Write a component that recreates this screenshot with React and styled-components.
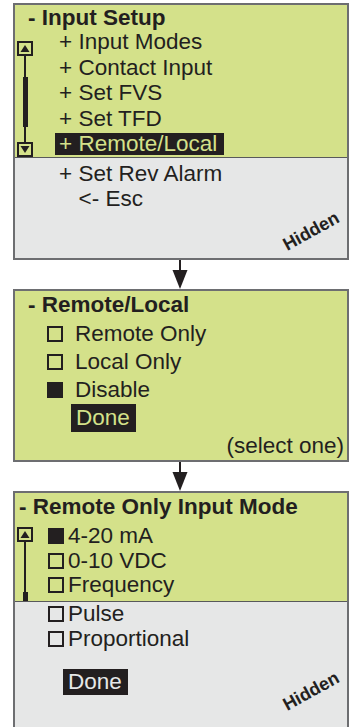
import React from 'react';
import styled, { createGlobalStyle } from 'styled-components';

const GREEN = '#d4e18a';
const GREY = '#e6e7e7';
const INK = '#231f20';

const GlobalStyle = createGlobalStyle`
  html, body {
    margin: 0;
    padding: 0;
    background: #ffffff;
    overflow: hidden;
  }
  body {
    font-family: "Liberation Sans", Arial, sans-serif;
    color: ${INK};
  }
`

const Page = styled.div`
  width: 336px;
  padding: 3px 0 0 13px;
  display: flex;
  flex-direction: column;
`

const Panel = styled.div`
  border: 2px solid #6d6e71;
  display: flex;
  flex-direction: column;
`

const Screen = styled.div`
  background: ${GREEN};
  height: ${p => p.$h}px;
  padding-top: ${p => p.$pt}px;
  box-sizing: border-box;
  display: flex;
  flex-direction: column;
  border-bottom: ${p => p.$divider ? `1px solid #58595b` : 'none'};
`

const HiddenArea = styled.div`
  position: relative;
  background: ${GREY};
  height: ${p => p.$h}px;
  padding: ${p => p.$pt}px 0 0 ${p => p.$pl}px;
  box-sizing: border-box;
`

const Title = styled.div`
  font-weight: bold;
  font-size: 22.5px;
  line-height: 22px;
  padding-left: ${p => p.$pl}px;
  margin-bottom: ${p => p.$mb || 0}px;
  white-space: pre;
`

const Body = styled.div`
  flex: 1;
  display: flex;
  padding-left: 2px;
`

const ScrollCol = styled.div`
  width: 16px;
  margin-top: ${p => p.$mt}px;
  display: flex;
  flex-direction: column;
  align-items: center;
`

const ScrollLine = styled.div`
  width: 2px;
  background: ${INK};
  flex: ${p => p.$grow};
`

const Thumb = styled.div`
  width: 5px;
  height: ${p => p.$h}px;
  background: ${INK};
`

const List = styled.div`
  margin-left: ${p => p.$ml}px;
`

const Item = styled.div`
  font-size: 22.5px;
  line-height: ${p => p.$lh || 25.5}px;
  padding-left: ${p => p.$indent || 0}px;
  white-space: pre;
`

const Selected = styled.span`
  display: inline-block;
  background: ${INK};
  color: ${GREEN};
  line-height: 22px;
  padding: 0 7px 0 4px;
  margin-left: -4px;
`

const Check = styled.span`
  display: inline-block;
  width: 16px;
  height: 16px;
  box-sizing: border-box;
  border: 2px solid ${INK};
  background: ${p => p.$on ? INK : 'transparent'};
  margin-right: ${p => p.$gap}px;
  vertical-align: -1px;
`

const DoneRow = styled.div`
  padding-left: ${p => p.$pl}px;
  margin-top: ${p => p.$mt || 0}px;
  font-size: 22.5px;
  line-height: ${p => p.$lh}px;
`

const DoneButton = styled.span`
  display: inline-block;
  background: ${INK};
  color: ${p => p.$fg};
  line-height: ${p => p.$lh}px;
  padding: 0 6px 0 5px;
`

const Hint = styled.div`
  font-size: 22.5px;
  line-height: 25.5px;
  text-align: right;
  padding-right: 3px;
  margin-top: 1px;
`

const HiddenLabel = styled.div`
  position: absolute;
  right: -4px;
  top: ${p => p.$top}px;
  width: 80px;
  text-align: center;
  font-weight: bold;
  font-size: 18px;
  line-height: 18px;
  transform: rotate(-29deg);
`

const ArrowWrap = styled.div`
  height: 29px;
  display: flex;
  justify-content: center;
  padding-right: 2px;
`

const UpBox = () => (
  <svg width="16" height="15" viewBox="0 0 16 15" style={{ display: 'block' }}>
    <rect x="1" y="1" width="14" height="13" fill="none" stroke={INK} strokeWidth="2" />
    <polygon points="3.5,11 12.5,11 8,4" fill={INK} />
  </svg>
)

const DownBox = () => (
  <svg width="16" height="15" viewBox="0 0 16 15" style={{ display: 'block' }}>
    <rect x="1" y="1" width="14" height="13" fill="none" stroke={INK} strokeWidth="2" />
    <polygon points="3.5,4 12.5,4 8,11" fill={INK} />
  </svg>
)

const Arrow = () => (
  <ArrowWrap>
    <svg width="16" height="29" viewBox="0 0 16 29" style={{ display: 'block' }}>
      <line x1="8" y1="0" x2="8" y2="12" stroke={INK} strokeWidth="2" />
      <polygon points="0.5,10 15.5,10 8,29" fill={INK} />
    </svg>
  </ArrowWrap>
)

const InputSetup = () => (
  <Panel>
    <Screen $h={153} $pt={2} $divider>
      <Title $pl={13}>- Input Setup</Title>
      <Body>
        <ScrollCol $mt={12}>
          <UpBox />
          <ScrollLine $grow={21} />
          <Thumb $h={50} />
          <ScrollLine $grow={15} />
          <DownBox />
        </ScrollCol>
        <List $ml={26}>
          <Item>+ Input Modes</Item>
          <Item>+ Contact Input</Item>
          <Item>+ Set FVS</Item>
          <Item>+ Set TFD</Item>
          <Item><Selected>+ Remote/Local</Selected></Item>
        </List>
      </Body>
    </Screen>
    <HiddenArea $h={100} $pt={2.5} $pl={44}>
      <Item>+ Set Rev Alarm</Item>
      <Item $indent={19.5}>{'<- Esc'}</Item>
      <HiddenLabel $top={64}>Hidden</HiddenLabel>
    </HiddenArea>
  </Panel>
)

const RemoteLocal = () => (
  <Panel>
    <Screen $h={169} $pt={3}>
      <Title $pl={13} $mb={4}>- Remote/Local</Title>
      <List $ml={32}>
        <Item $lh={28}><Check $gap={12} />Remote Only</Item>
        <Item $lh={28}><Check $gap={12} />Local Only</Item>
        <Item $lh={28}><Check $gap={12} $on />Disable</Item>
      </List>
      <DoneRow $pl={56} $lh={28}>
        <DoneButton $lh={28} $fg={GREEN}>Done</DoneButton>
      </DoneRow>
      <Hint>(select one)</Hint>
    </Screen>
  </Panel>
)

const RemoteOnlyMode = () => (
  <Panel>
    <Screen $h={109} $pt={3} $divider>
      <Title $pl={4} $mb={6}>- Remote Only Input Mode</Title>
      <Body>
        <ScrollCol $mt={3}>
          <UpBox />
          <ScrollLine $grow={1} />
          <Thumb $h={9} />
        </ScrollCol>
        <List $ml={15}>
          <Item $lh={24.5}><Check $gap={4} $on />4-20 mA</Item>
          <Item $lh={24.5}><Check $gap={4} />0-10 VDC</Item>
          <Item $lh={24.5}><Check $gap={4} />Frequency</Item>
        </List>
      </Body>
    </Screen>
    <HiddenArea $h={140} $pt={0} $pl={33}>
      <Item $lh={24.5}><Check $gap={4} />Pulse</Item>
      <Item $lh={24.5}><Check $gap={4} />Proportional</Item>
      <DoneRow $pl={15} $lh={26} $mt={18}>
        <DoneButton $lh={26} $fg={GREY}>Done</DoneButton>
      </DoneRow>
      <HiddenLabel $top={80}>Hidden</HiddenLabel>
    </HiddenArea>
  </Panel>
)

const App = () => {
  return (
    <Page>
      <GlobalStyle />
      <InputSetup />
      <Arrow />
      <RemoteLocal />
      <Arrow />
      <RemoteOnlyMode />
    </Page>
  )
}

export default App
